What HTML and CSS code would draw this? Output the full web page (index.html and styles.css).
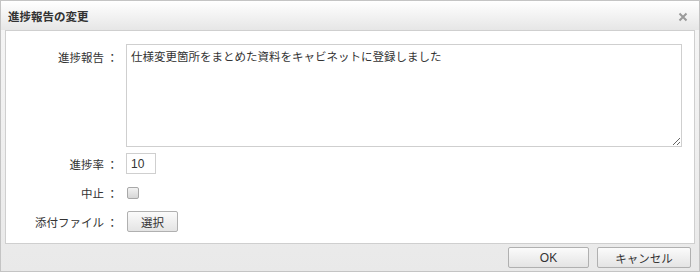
FILE: index.html
```html
<!DOCTYPE html>
<html lang="ja">
<head>
    <meta charset="UTF-8">
    <title>進捗報告の変更</title>
    <link rel="stylesheet" href="styles.css">
</head>
<body>
    <div class="dialog">
        <div class="titlebar">
            <span class="title">進捗報告の変更</span>
            <svg class="close" width="10" height="10" viewBox="0 0 10 10">
                <path d="M1.5 1.5 L8.5 8.5 M8.5 1.5 L1.5 8.5" stroke="#9a9a9a" stroke-width="2"/>
            </svg>
        </div>

        <div class="content">
            <div class="row row-report">
                <label class="label">進捗報告 ：</label>
                <textarea class="report">仕様変更箇所をまとめた資料をキャビネットに登録しました</textarea>
            </div>
            <div class="row row-rate">
                <label class="label">進捗率 ：</label>
                <input class="rate" type="text" value="10">
            </div>
            <div class="row row-stop">
                <label class="label">中止 ：</label>
                <span class="check"></span>
            </div>
            <div class="row row-file">
                <label class="label">添付ファイル ：</label>
                <button class="btn btn-select">選択</button>
            </div>
        </div>

        <div class="footer">
            <button class="btn btn-ok">OK</button>
            <button class="btn btn-cancel">キャンセル</button>
        </div>
    </div>
</body>
</html>
```

FILE: styles.css
```css
body {
    margin: 0;
    font-family: "Noto Sans CJK JP", "Noto Sans", sans-serif;
    font-size: 12px;
    color: #333;
}
.dialog {
    width: 700px;
    height: 272px;
    box-sizing: border-box;
    border: 1px solid #c4c4c4;
    background: linear-gradient(#f6f6f6, #e9e9e9);
    display: flex;
    flex-direction: column;
}
.titlebar {
    height: 29px;
    display: flex;
    align-items: center;
    justify-content: space-between;
    padding: 0 11px 0 7px;
    background: linear-gradient(#ffffff, #e6e6e6);
}
.title {
    font-weight: bold;
    font-size: 11.5px;
    color: #333;
}
.close {
    margin-top: 3px;
}
.content {
    margin: 0 4px;
    height: 214px;
    box-sizing: border-box;
    border: 1px solid #cfcfcf;
    background: #fff;
    padding-top: 13px;
}
.row {
    display: flex;
    align-items: center;
}
.label {
    width: 112px;
    flex: none;
    text-align: right;
    margin-right: 8px;
    font-size: 11.5px;
    line-height: 20px;
}
.row-report {
    align-items: flex-start;
}
.row-report .label {
    margin-top: 3px;
}
.report {
    width: 556px;
    height: 103px;
    box-sizing: border-box;
    border: 1px solid #cfcfcf;
    padding: 3px 4px;
    margin: 0;
    font-family: inherit;
    font-size: 11.5px;
    color: #333;
    resize: both;
}
.row-rate {
    margin-top: 6px;
}
.rate {
    width: 30px;
    height: 21px;
    box-sizing: border-box;
    border: 1px solid #cfcfcf;
    padding: 0 4px;
    margin: 0;
    font-family: "Liberation Sans", sans-serif;
    font-size: 12px;
    color: #333;
}
.row-stop {
    margin-top: 9px;
}
.check {
    width: 10px;
    height: 10px;
    margin-left: 1px;
    border: 1px solid #a8a8a8;
    border-radius: 2px;
    background: linear-gradient(#f2f2f2, #d6d6d6);
}
.row-file {
    margin-top: 8px;
}
.btn {
    height: 21px;
    box-sizing: border-box;
    border: 1px solid #b0b0b0;
    border-radius: 2px;
    background: linear-gradient(#fbfbfb, #e4e4e4);
    font-family: inherit;
    font-size: 11.5px;
    color: #333;
    padding: 0;
    margin: 0;
}
.btn-select {
    width: 51px;
    margin-left: 1px;
}
.footer {
    flex: 1;
    display: flex;
    justify-content: flex-end;
    align-items: center;
    gap: 8px;
    padding: 0 8px 0 0;
}
.btn-ok {
    width: 81px;
    font-family: "Liberation Sans", sans-serif;
    font-size: 12px;
}
.btn-cancel {
    width: 94px;
}
```
